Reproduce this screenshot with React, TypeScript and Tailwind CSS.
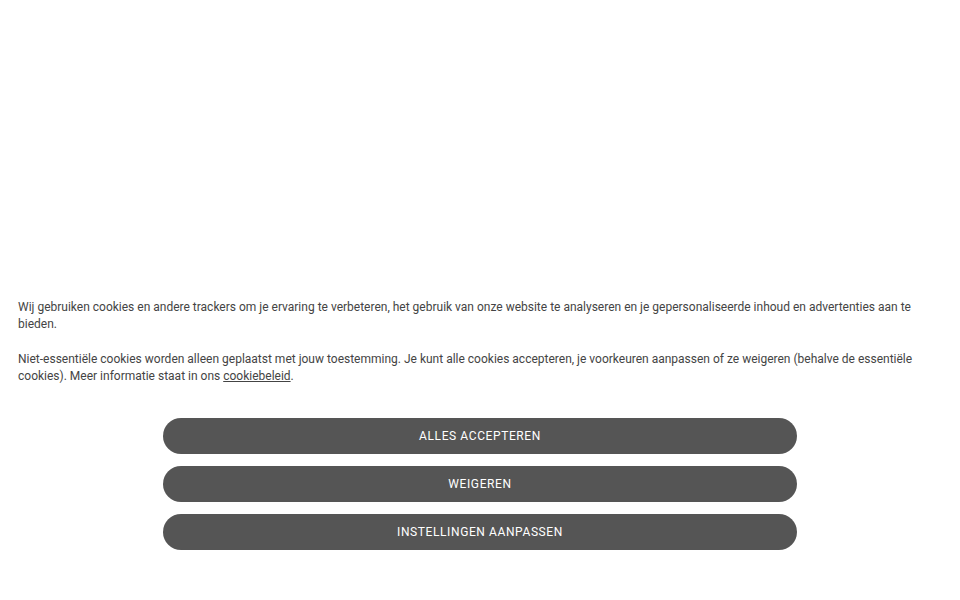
export default function App() {
  const buttons = ["Alles accepteren", "Weigeren", "Instellingen aanpassen"];

  return (
    <div className="flex h-screen flex-col justify-end bg-white font-['Roboto',sans-serif] text-[12px] leading-[17px] text-[#444]">
      <div className="px-[18px] pb-[50px]">
        <p>
          Wij gebruiken cookies en andere trackers om je ervaring te verbeteren, het gebruik van onze website te
          analyseren en je gepersonaliseerde inhoud en advertenties aan te bieden.
        </p>
        <p className="mt-[18px]">
          Niet-essentiële cookies worden alleen geplaatst met jouw toestemming. Je kunt alle cookies accepteren, je
          voorkeuren aanpassen of ze weigeren (behalve de essentiële cookies). Meer informatie staat in ons{" "}
          <a href="#" className="underline">
            cookiebeleid
          </a>
          .
        </p>

        <div className="mx-auto mt-[33px] flex w-[634px] flex-col gap-3">
          {buttons.map((label) => (
            <button
              key={label}
              className="h-9 w-full rounded-full bg-[#555] text-[12px] uppercase tracking-[0.6px] text-white"
            >
              {label}
            </button>
          ))}
        </div>
      </div>
    </div>
  );
}
